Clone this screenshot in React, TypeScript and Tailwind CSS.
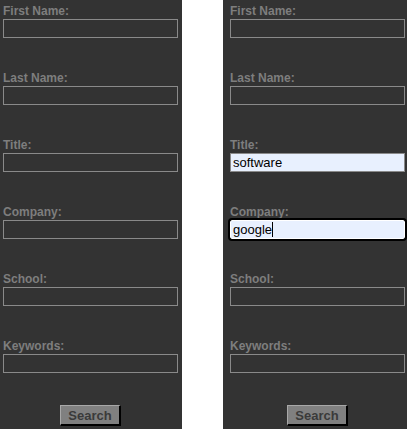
import React from 'react';

interface Field {
  label: string;
  value?: string;
  focused?: boolean;
}

const emptyFields: Field[] = [
  { label: 'First Name:' },
  { label: 'Last Name:' },
  { label: 'Title:' },
  { label: 'Company:' },
  { label: 'School:' },
  { label: 'Keywords:' },
];

const filledFields: Field[] = [
  { label: 'First Name:' },
  { label: 'Last Name:' },
  { label: 'Title:', value: 'software' },
  { label: 'Company:', value: 'google', focused: true },
  { label: 'School:' },
  { label: 'Keywords:' },
];

function FieldRow({ field }: { field: Field }) {
  const filled = field.value !== undefined;
  return (
    <div className="flex flex-col">
      <label className="h-[14px] text-[12px] leading-[14px] font-bold text-[#7e7e7e] mb-px">
        {field.label}
      </label>
      {field.focused ? (
        <div className="h-[19px] w-full flex items-center bg-[#e8f0fe] border border-white rounded-[2px] outline-2 outline-black outline-offset-0 pl-[2px] text-[13px] text-black font-['Liberation_Sans',Arial,sans-serif]">
          <span>{field.value}</span>
          <span className="w-px h-[15px] bg-black" />
        </div>
      ) : (
        <input
          type="text"
          readOnly
          defaultValue={field.value ?? ''}
          className={
            filled
              ? 'h-[19px] w-full bg-[#e8f0fe] border border-[#8a8a8a] pl-[2px] text-[13px] text-black outline-none'
              : 'h-[19px] w-full bg-transparent border border-[#8a8a8a] pl-[2px] text-[13px] outline-none'
          }
        />
      )}
    </div>
  );
}

function SearchForm({ fields }: { fields: Field[] }) {
  return (
    <div className="w-[175px] flex flex-col pt-[4px] font-['Liberation_Sans',Arial,sans-serif]">
      <div className="flex flex-col gap-[33px]">
        {fields.map((f) => (
          <FieldRow key={f.label} field={f} />
        ))}
      </div>
      <div className="flex justify-center mt-[32px]">
        <button className="h-[21px] w-[61px] bg-[#808080] border-t border-l border-t-[#a8a8a8] border-l-[#a8a8a8] border-b-2 border-r-2 border-b-black border-r-black text-[13px] font-bold text-[#3a3a3a] leading-none">
          Search
        </button>
      </div>
    </div>
  );
}

export default function App() {
  return (
    <div className="w-[407px] h-[429px] bg-white flex overflow-hidden">
      <div className="w-[182px] h-full bg-[#333333] pl-[3px]">
        <SearchForm fields={emptyFields} />
      </div>
      <div className="w-[41px]" />
      <div className="w-[184px] h-full bg-[#333333] pl-[7px]">
        <SearchForm fields={filledFields} />
      </div>
    </div>
  );
}
